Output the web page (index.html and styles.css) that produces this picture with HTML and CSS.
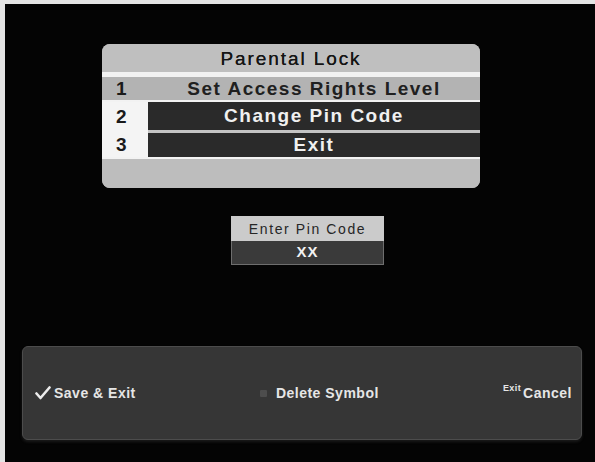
FILE: index.html
```html
<!DOCTYPE html>
<html>
<head>
<meta charset="utf-8">
<link rel="stylesheet" href="styles.css">
</head>
<body>
<div class="screen">
  <div class="panel">
    <div class="panel-title">Parental Lock</div>
    <div class="sep-white"></div>
    <div class="row row-1">
      <div class="num">1</div>
      <div class="label">Set Access Rights Level</div>
    </div>
    <div class="line-white"></div>
    <div class="row row-dark row-2">
      <div class="num">2</div>
      <div class="bar">Change Pin Code</div>
    </div>
    <div class="row row-dark row-3">
      <div class="num">3</div>
      <div class="bar">Exit</div>
    </div>
    <div class="line-white"></div>
    <div class="panel-footer"></div>
  </div>

  <div class="pin">
    <div class="pin-head">Enter Pin Code</div>
    <div class="pin-value">XX</div>
  </div>

  <div class="actions">
    <div class="action">
      <svg class="check" width="16" height="14" viewBox="0 0 16 14"><path d="M1.5 7.5 L5.5 12 L14.5 1.5" fill="none" stroke="#ececec" stroke-width="2.6" stroke-linecap="round" stroke-linejoin="round"/></svg>
      <span>Save &amp; Exit</span>
    </div>
    <div class="action">
      <span class="dim-key"></span>
      <span>Delete Symbol</span>
    </div>
    <div class="action action-cancel">
      <span class="key-exit">Exit</span>
      <span>Cancel</span>
    </div>
  </div>
</div>
</body>
</html>
```

FILE: styles.css
```css
html, body {
  margin: 0;
  padding: 0;
}
body {
  background: #e4e4e4;
  width: 595px;
  height: 462px;
  overflow: hidden;
  font-family: "Liberation Sans", Arial, sans-serif;
}
.screen {
  margin: 4px 0 0 5px;
  width: 590px;
  height: 458px;
  background: #040404;
  display: flex;
  flex-direction: column;
  align-items: flex-start;
}

/* Parental lock panel */
.panel {
  margin: 40px 0 0 97px;
  width: 378px;
  border-radius: 8px;
  overflow: hidden;
  background: #bdbdbd;
  display: flex;
  flex-direction: column;
}
.panel-title {
  height: 28px;
  line-height: 30px;
  text-align: center;
  font-size: 19px;
  letter-spacing: 1.9px;
  color: #151515;
  background: #bfbfbf;
  text-shadow: 0 0 0.6px #151515;
}
.sep-white {
  height: 5px;
  background: #f2f2f2;
}
.line-white {
  height: 2px;
  background: #f2f2f2;
}
.row {
  display: flex;
  font-size: 19px;
  font-weight: bold;
  letter-spacing: 1.5px;
}
.num {
  width: 46px;
  flex: none;
  box-sizing: border-box;
  padding-right: 6px;
  text-align: center;
  color: #1a1a1a;
}
.row-1 {
  height: 23px;
  line-height: 24px;
  background: #b3b3b3;
}
.row-1 .label {
  flex: 1;
  text-align: center;
  color: #202020;
}
.row-dark {
  background: #f4f4f4;
}
.row-dark .bar {
  flex: 1;
  text-align: center;
  color: #f0f0f0;
  background: #2a2a2a;
}
.row-2 {
  height: 31px;
  line-height: 28px;
}
.row-2 .bar {
  border-bottom: 3px solid #c4c4c4;
}
.row-2 .num {
  line-height: 30px;
}
.row-3 {
  height: 24px;
  line-height: 24px;
}
.panel-footer {
  height: 29px;
  background: #bdbdbd;
}

/* Pin dialog */
.pin {
  margin: 28px 0 0 226px;
  width: 153px;
  display: flex;
  flex-direction: column;
}
.pin-head {
  height: 25px;
  line-height: 26px;
  background: #cbcbcb;
  color: #262626;
  text-align: center;
  font-size: 14px;
  letter-spacing: 1.6px;
}
.pin-value {
  height: 24px;
  box-sizing: border-box;
  line-height: 22px;
  background: #3a3a3a;
  border: 1px solid #6e6e6e;
  border-top: none;
  color: #f2f2f2;
  text-align: center;
  font-size: 15px;
  font-weight: bold;
  letter-spacing: 1px;
}

/* Bottom actions bar */
.actions {
  margin: 81px 0 0 17px;
  width: 560px;
  height: 94px;
  box-sizing: border-box;
  border: 1px solid #4c4c4c;
  border-radius: 6px;
  background: #363636;
  display: flex;
  align-items: center;
  justify-content: space-between;
  padding: 0 9px 0 12px;
  box-shadow: 0 2px 3px rgba(90, 90, 90, 0.25);
}
.action {
  display: flex;
  align-items: center;
  color: #e6e6e6;
  font-size: 14px;
  font-weight: bold;
  letter-spacing: 0.5px;
}
.check {
  margin-right: 3px;
  margin-top: -1px;
}
.dim-key {
  width: 7px;
  height: 7px;
  background: #4d4d4d;
  border-radius: 1px;
  margin-right: 9px;
}
.action-cancel {
  align-items: flex-start;
}
.key-exit {
  font-size: 9px;
  letter-spacing: 0.4px;
  margin-right: 2px;
  margin-top: -2px;
}
```
